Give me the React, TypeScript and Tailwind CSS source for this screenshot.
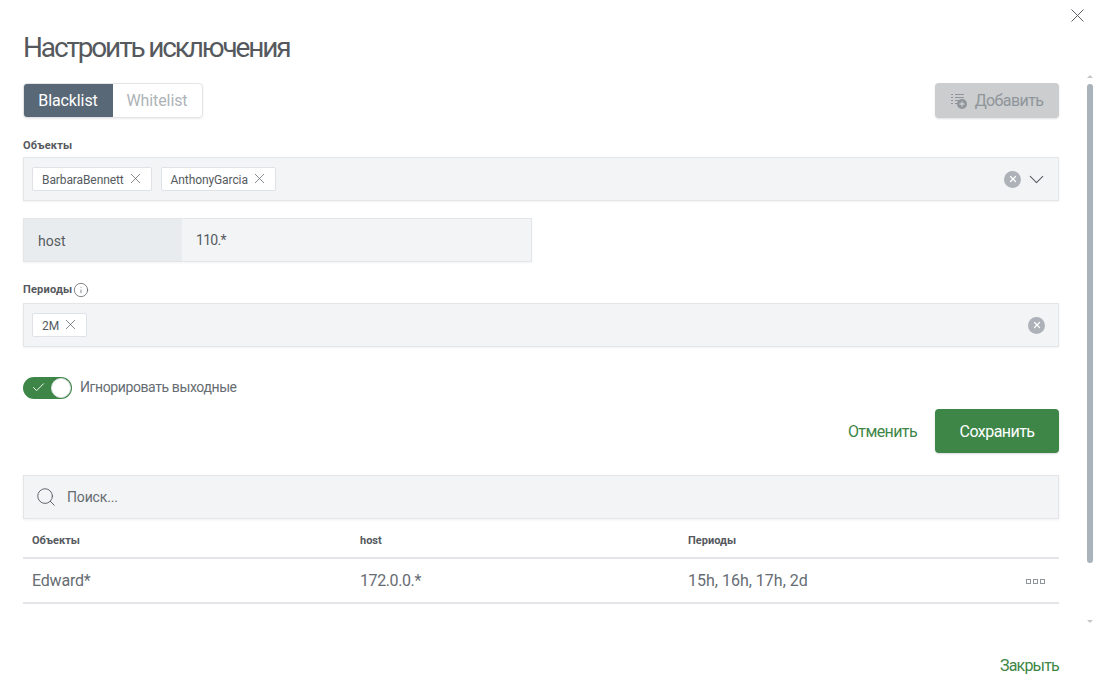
import { X, ChevronDown, Check, Search, Info } from 'lucide-react'

const font = { fontFamily: 'Roboto, "Noto Sans", sans-serif' }

function Tag({ label }: { label: string }) {
  return (
    <span className="flex h-[24px] items-center gap-[3px] rounded-[2px] border border-[#dfe2e6] bg-white pl-[9px] pr-[7px] text-[12px] tracking-[-0.1px] text-[#555b61]">
      <span className="pt-[2px]">{label}</span>
      <X size={17} strokeWidth={1} className="text-[#555b61] mb-[2px]" />
    </span>
  )
}

function ClearIcon() {
  return (
    <span className="flex h-[17px] w-[17px] items-center justify-center rounded-full bg-[#acb2b8]">
      <X size={10} strokeWidth={3} className="text-white" />
    </span>
  )
}

function FieldLabel({ children }: { children: React.ReactNode }) {
  return <div className="text-[11px] font-bold leading-[14px] tracking-[0.2px] text-[#55595e]">{children}</div>
}

function AddIcon() {
  return (
    <svg width="16" height="16" viewBox="0 0 16 16" className="text-[#8f959a]">
      <g fill="currentColor">
        <rect x="0" y="1" width="2" height="1" />
        <rect x="0" y="4" width="2" height="1" />
        <rect x="0" y="7" width="2" height="1" />
        <rect x="0" y="10" width="2" height="1" />
        <rect x="4" y="1" width="9" height="1" />
        <rect x="4" y="4" width="9" height="1" />
        <rect x="4" y="7" width="4" height="1" />
        <rect x="4" y="10" width="3" height="1" />
        <circle cx="11" cy="11" r="5" />
      </g>
      <path d="M11 8.5v5M8.5 11h5" stroke="#cbcdcf" strokeWidth="1.4" />
    </svg>
  )
}

export default function App() {
  return (
    <div style={font} className="relative h-[698px] w-[1095px] overflow-hidden bg-white text-[#555b61]">
      <button className="absolute right-[6px] top-[4px] text-[#55595e]">
        <X size={23} strokeWidth={1} />
      </button>

      <div className="absolute right-[2px] top-[75px] flex h-[548px] w-[6px] flex-col items-center">
        <span className="h-0 w-0 border-x-[3px] border-b-[3px] border-x-transparent border-b-[#c3c8cc]" />
        <span className="mt-[6px] h-[479px] w-[6px] rounded-[3px] bg-[#a9b3bb]" />
        <span className="mt-auto h-0 w-0 border-x-[3px] border-t-[3px] border-x-transparent border-t-[#c3c8cc]" />
      </div>

      <div className="flex w-[1059px] flex-col pl-[23px]">
        <h1 className="mt-[29px] h-[37px] text-[28px] font-normal leading-[37px] tracking-[-2.15px] text-[#55595e]">
          Настроить исключения
        </h1>

        <div className="mt-[17px] flex items-start justify-between">
          <div className="flex h-[35px] overflow-hidden rounded-[4px] border border-[#e2e4e7] text-[16px] shadow-[0_1px_2px_rgba(0,0,0,0.08)]">
            <span className="-m-px flex w-[90px] items-center justify-center bg-[#596877] tracking-[-0.1px] text-white">
              Blacklist
            </span>
            <span className="flex w-[90px] items-center justify-center tracking-[-0.1px] text-[#aeb3b8]">Whitelist</span>
          </div>
          <button className="flex h-[35px] w-[124px] items-center justify-center gap-[8px] rounded-[4px] bg-[#cbcdcf] text-[16px] tracking-[-0.6px] text-[#8f959a] shadow-[0_1px_2px_rgba(0,0,0,0.12)]">
            <AddIcon />
            Добавить
          </button>
        </div>

        <div className="mt-[21px]">
          <FieldLabel>Объекты</FieldLabel>
        </div>
        <div className="mt-[4px] flex h-[44px] items-center gap-[9px] border border-[#e3e5e8] bg-[#f3f4f6] pl-[8px] pr-[13px] shadow-[0_1px_2px_rgba(0,0,0,0.05)]">
          <Tag label="BarbaraBennett" />
          <Tag label="AnthonyGarcia" />
          <div className="ml-auto flex items-center gap-[3px]">
            <ClearIcon />
            <ChevronDown size={25} strokeWidth={1} className="-mr-[4px] text-[#55595e]" />
          </div>
        </div>

        <div className="mt-[17px] flex h-[44px] w-[509px] border border-[#e3e5e8] bg-[#f3f4f6] text-[14px] shadow-[0_1px_2px_rgba(0,0,0,0.05)]">
          <span className="flex w-[158px] items-center bg-[#e9ecee] pl-[14px] pt-[3px]">host</span>
          <span className="flex items-center pl-[14px] tracking-[-0.7px]">110.*</span>
        </div>

        <div className="mt-[20px] flex h-[16px] items-center gap-[1px]">
          <FieldLabel>Периоды</FieldLabel>
          <Info size={16} strokeWidth={1.1} className="text-[#55595e]" />
        </div>
        <div className="mt-[5px] flex h-[44px] items-center border border-[#e3e5e8] bg-[#f3f4f6] pl-[8px] pr-[13px] shadow-[0_1px_2px_rgba(0,0,0,0.05)]">
          <Tag label="2M" />
          <div className="ml-auto">
            <ClearIcon />
          </div>
        </div>

        <div className="mt-[29px] flex h-[23px] items-center gap-[8px]">
          <span className="flex h-[22px] w-[49px] items-center justify-between rounded-full bg-[#3e8647] pl-[8px] pr-px">
            <Check size={15} strokeWidth={1.5} className="text-white" />
            <span className="h-[20px] w-[20px] rounded-full border border-[#dde0e3] bg-white" />
          </span>
          <span className="text-[14px] tracking-[-0.4px] text-[#666c72]">Игнорировать выходные</span>
        </div>

        <div className="mt-[10px] flex items-center justify-end gap-[18px]">
          <button className="pt-px text-[16px] tracking-[-0.6px] text-[#3e8647]">Отменить</button>
          <button className="h-[44px] w-[124px] rounded-[4px] bg-[#3e8647] pt-px text-[16px] tracking-[-0.55px] text-white shadow-[0_1px_2px_rgba(0,0,0,0.15)]">
            Сохранить
          </button>
        </div>

        <div className="mt-[22px] flex h-[44px] items-center gap-[10px] border border-[#e3e5e8] bg-[#f3f4f6] pl-[11px] text-[14px] tracking-[-0.15px] text-[#666c72] shadow-[0_1px_3px_rgba(0,0,0,0.06)]">
          <Search size={22} strokeWidth={1} className="text-[#55595e]" />
          Поиск...
        </div>

        <div className="grid h-[40px] grid-cols-[328px_328px_1fr] items-center border-b-2 border-[#e3e5e8] pl-[9px] pt-[7px] text-[11px] font-bold text-[#55595e]">
          <span>Объекты</span>
          <span>host</span>
          <span>Периоды</span>
        </div>
        <div className="grid h-[45px] grid-cols-[328px_328px_1fr_auto] items-center border-b-2 border-[#e3e5e8] pl-[9px] pr-[14px] pt-px text-[16px] text-[#666c72]">
          <span className="tracking-[-0.2px]">Edward*</span>
          <span className="tracking-[-0.4px]">172.0.0.*</span>
          <span>15h, 16h, 17h, 2d</span>
          <span className="flex gap-[2px]">
            <span className="h-[5px] w-[5px] border border-[#8f959a]" />
            <span className="h-[5px] w-[5px] border border-[#8f959a]" />
            <span className="h-[5px] w-[5px] border border-[#8f959a]" />
          </span>
        </div>

        <div className="mt-[50px] flex justify-end">
          <button className="text-[16px] tracking-[-0.8px] text-[#3e8647]">Закрыть</button>
        </div>
      </div>
    </div>
  )
}
